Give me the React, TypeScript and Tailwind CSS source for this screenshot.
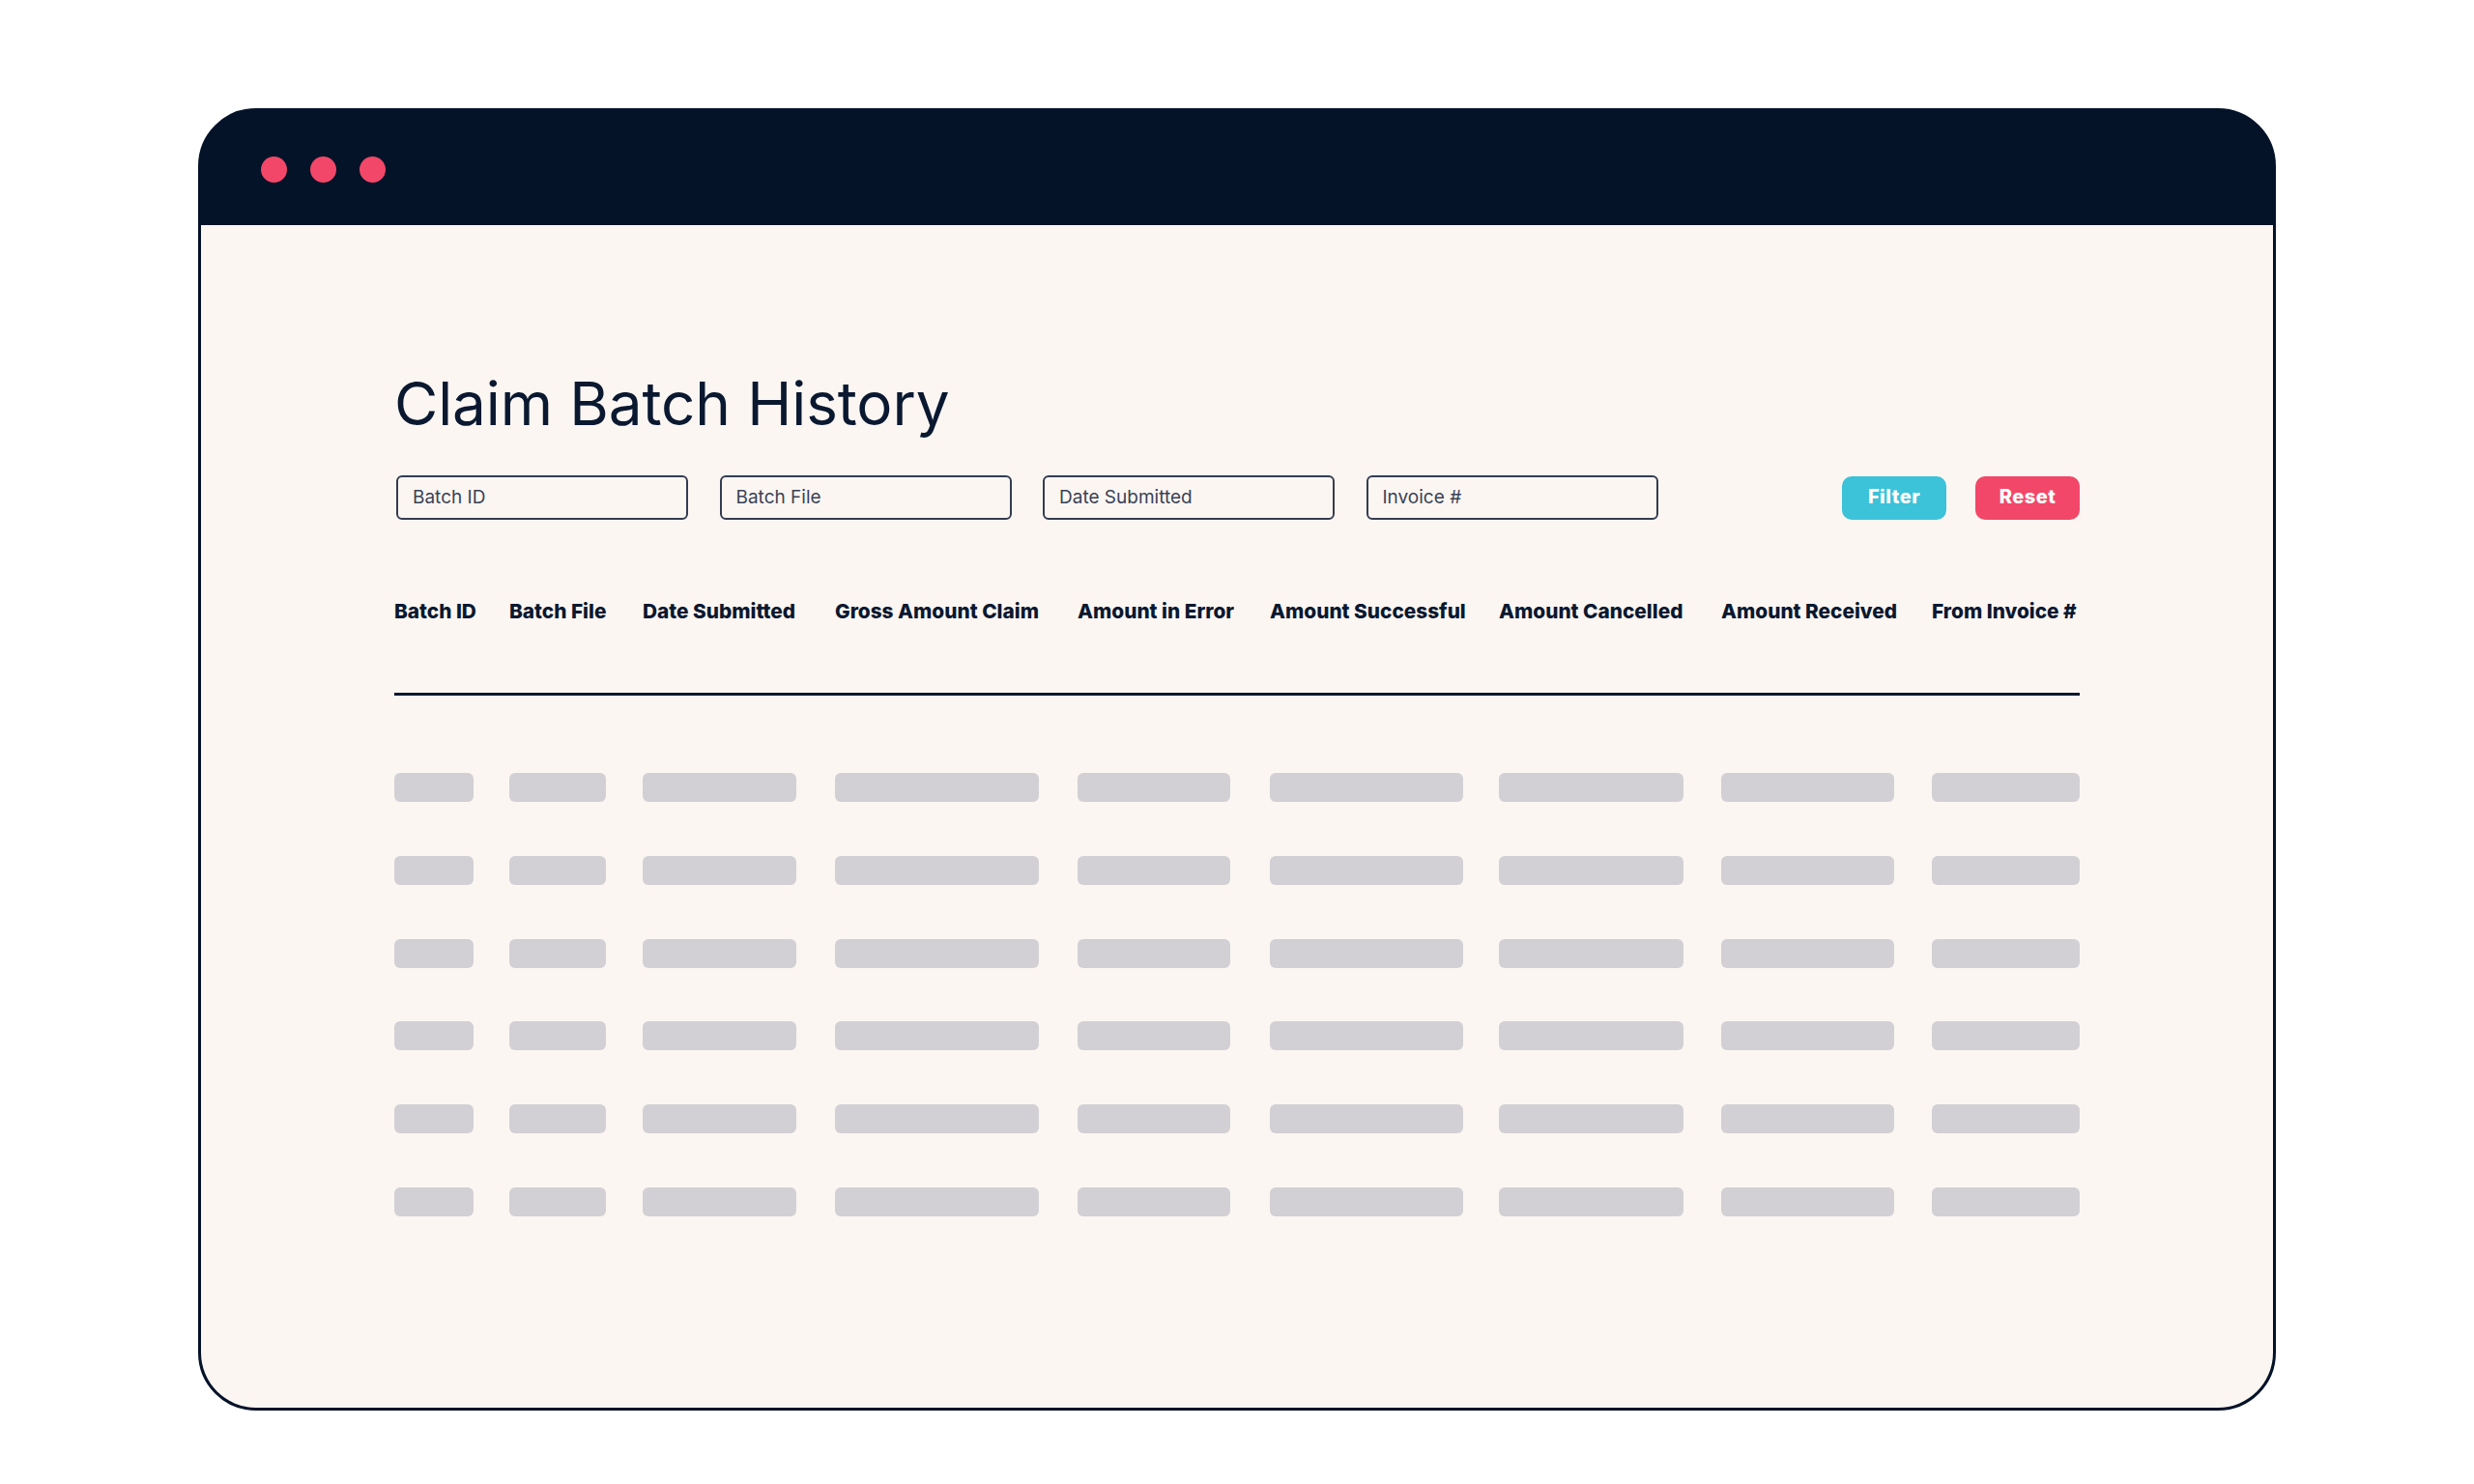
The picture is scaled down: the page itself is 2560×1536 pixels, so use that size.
const COLUMNS = [
  { label: 'Batch ID', bar: 'w-[82px]' },
  { label: 'Batch File', bar: 'w-[100px]' },
  { label: 'Date Submitted', bar: 'w-[159px]' },
  { label: 'Gross Amount Claim', bar: 'w-[211px]' },
  { label: 'Amount in Error', bar: 'w-[158px]' },
  { label: 'Amount Successful', bar: 'w-[200px]' },
  { label: 'Amount Cancelled', bar: 'w-[191px]' },
  { label: 'Amount Received', bar: 'w-[179px]' },
  { label: 'From Invoice #', bar: 'w-[153px]' },
];

const GRID = 'grid grid-cols-[119px_138px_199px_251px_199px_237px_230px_218px_153px]';
const ROWS = [0, 1, 2, 3, 4, 5];
const FILTERS = ['Batch ID', 'Batch File', 'Date Submitted', 'Invoice #'];

export default function App() {
  return (
    <div className="min-h-[1536px] bg-white pl-[205px] pt-[112px] font-['Inter',sans-serif] text-[#0a1830]">
      <div className="flex h-[1348px] w-[2150px] flex-col rounded-[60px] border-[3px] border-[#051329] bg-[#051329]">
        <div className="flex h-[118px] items-center gap-[24px] pt-[3px] pl-[62px]">
          <span className="h-[27px] w-[27px] rounded-full bg-[#f24768]" />
          <span className="h-[27px] w-[27px] rounded-full bg-[#f24768]" />
          <span className="h-[27px] w-[27px] rounded-full bg-[#f24768]" />
        </div>

        <div className="flex flex-1 flex-col rounded-b-[57px] bg-[#fbf6f2] pl-[200px] pr-[200px] pt-[149px]">
          <h1 className="text-[62px] font-normal leading-[72px] tracking-[-0.1px]">Claim Batch History</h1>

          <div className="mt-[38px] flex items-center pl-[2px]">
            <div className="flex gap-[32.5px]">
              {FILTERS.map((name) => (
                <div
                  key={name}
                  className="flex h-[46px] w-[302px] items-center rounded-[6px] border-2 border-[#343c50] pl-[15px] text-[19px] text-[#3a4256]"
                >
                  {name}
                </div>
              ))}
            </div>
            <div className="ml-auto flex gap-[30px]">
              <button className="h-[45px] w-[108px] rounded-[10px] bg-[#3cc2d9] pb-[2px] text-[20px] font-extrabold tracking-[0.5px] text-white">
                Filter
              </button>
              <button className="h-[45px] w-[108px] rounded-[10px] bg-[#f24768] pb-[2px] text-[20px] font-extrabold tracking-[0.5px] text-white">
                Reset
              </button>
            </div>
          </div>

          <div className={`${GRID} mt-[80px] h-[102px] border-b-[3px] border-[#0a1830] text-[20.8px] font-extrabold leading-[30px] whitespace-nowrap`}>
            {COLUMNS.map((col) => (
              <div key={col.label}>{col.label}</div>
            ))}
          </div>

          <div className="mt-[80px] flex flex-col gap-[55.75px]">
            {ROWS.map((row) => (
              <div key={row} className={GRID}>
                {COLUMNS.map((col) => (
                  <div key={col.label} className={`h-[30px] rounded-[6px] bg-[#d2d0d4] ${col.bar}`} />
                ))}
              </div>
            ))}
          </div>
        </div>
      </div>
    </div>
  );
}
